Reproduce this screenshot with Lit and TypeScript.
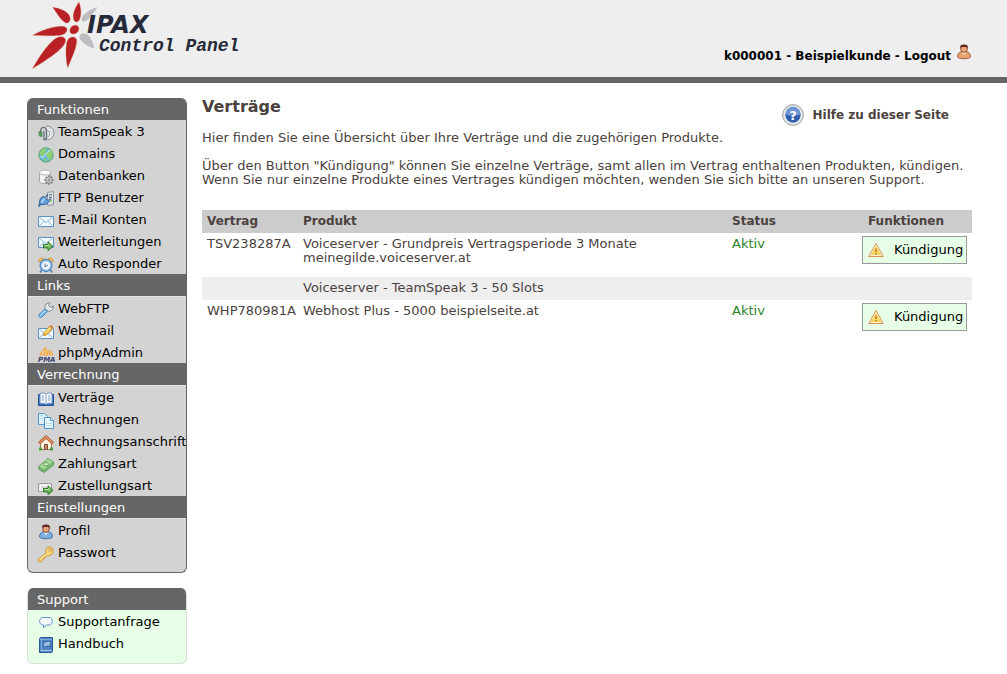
import { LitElement, css, html, svg, type SVGTemplateResult } from "lit";
import { customElement, property } from "lit/decorators.js";

const arrow = svg`<path d="M5.500 9.500h4.500V6.800l5 4.600-5 4.200v-2.700H5.500z" fill="#6fb85a" stroke="#32762a"/>
  <path d="M6.500 10.500h4.500V9" fill="none" stroke="#b4e29c"/>`;

const envelope = svg`<path d="M.5 2.500h15v10H.5z" fill="#f2f9ff" stroke="#5c93c4"/>
  <path d="M1.500 3.500l6.500 5 6.500-5M1.500 11.500L6 7.500m8.500 4L10 7.500" fill="none" stroke="#8db9dd"/>`;

const person = (shirt: string, edge: string) => svg`
  <path d="M1.500 13c0-3.500 2-5 4.500-5.500h4c2.500.5 4.500 2 4.500 5.500-1 2.300-12 2.300-13 0z" fill="${shirt}" stroke="${edge}"/>
  <path d="M5.500 8.500l2.500 2.500 2.500-2.500" fill="#fff" opacity=".7"/>
  <circle cx="8" cy="5" r="3.300" fill="#eaa577" stroke="#97502f"/>
  <path d="M4 5C3.500 1 6 .5 8 .5S12.500 1 12 5l-1-2H5z" fill="#5e2a22"/>`;

const icons: Record<string, SVGTemplateResult> = {
  teamspeak: svg`
    <path d="M8 1a7 7 0 0 1 2 14" fill="#d9dde0" stroke="#8e9499"/>
    <path d="M8 3.500a5 5 0 0 1 2 9.500M8 6a3 3 0 0 1 2 5" fill="none" stroke="#f5f7f8"/>
    <path d="M8 4.700a4 4 0 0 1 2 7.300" fill="none" stroke="#8e9499"/>
    <path d="M2.500 7C2.500 1 8.500 1 8.500 6v8.500H6V6" fill="none" stroke="#66707a" stroke-width="1.300"/>
    <path d="M1 6.500h3v5H2.500C1.500 11.500 1 10.500 1 9.500z" fill="#49a14d" stroke="#667a6b" stroke-width=".7"/>`,
  globe: svg`
    <circle cx="8" cy="8" r="7" fill="#68b4e2"/>
    <path d="M2 5c1-2 3-3.500 5-3.500L9 3 7 5l1 2-3 1-1 2-2-3zm7 1l3-3 2 2v5l-2 3-2-1-1-3-1-2zM5 11l3 1 1 2.500-3-1z" fill="#8cd270"/>
    <path d="M2.500 9.500c2 2 5-1 6-3s3-4 5-2" fill="none" stroke="#e3f5ec"/>
    <circle cx="8" cy="8" r="7.200" fill="none" stroke="#5cab60"/>`,
  database: svg`
    <path d="M1.500 3.500v9c0 2.700 11 2.700 11 0v-9z" fill="#f4f4f4" stroke="#a8a8a8"/>
    <ellipse cx="7" cy="3.500" rx="5.500" ry="2.500" fill="#fff" stroke="#b0b0b0"/>
    <path d="M11 6.300v9.400M6.300 11h9.400M7.700 7.700l6.600 6.600m0-6.600l-6.600 6.600" stroke="#72777b" stroke-width="1.600"/>
    <circle cx="11" cy="11" r="3.200" fill="#d4d7d9" stroke="#72777b" stroke-width=".8"/><circle cx="11" cy="11" r="1" fill="#fff" stroke="#666" stroke-width=".8"/>`,
  plug: svg`
    <path d="M9.500 1.500l6-1v13l-6 1z" fill="#dce4ea" stroke="#8f98a0"/>
    <path d="M11 4l3-.5m-3 3l3-.5" stroke="#59616a"/><circle cx="13" cy="10" r="1" fill="#63c64d"/>
    <path d="M.5 15.500l3-3.500" stroke="#476f9e" stroke-width="2"/>
    <path d="M1.500 13c-.5-4 1.500-7.500 4.500-7.500l5 5C10.500 13 6 14.500 1.500 13z" fill="#5f9cd8" stroke="#2f659f"/>
    <path d="M7.500 6l2.500-2.500m.5 6l2.500-2" stroke="#355b83" stroke-width="1.300"/><path d="M3.500 11.500l3-4" stroke="#bbddf5" stroke-width="1.500"/>`,
  mail: svg`<g transform="translate(0 1)">${envelope}</g>`,
  forward: svg`${envelope}${arrow}`,
  clock: svg`
    <path d="M1 5c-1-3 2-5 5-3zm14 0c1-3-2-5-5-3z" fill="#f6c66a" stroke="#d18a2a" stroke-width=".8"/>
    <path d="M3.500 13L2 15.500m10.500-2.500l1.500 2.500" stroke="#4c79aa" stroke-width="1.500"/>
    <circle cx="8" cy="8.500" r="6" fill="#8cbfec" stroke="#3b78b5"/>
    <circle cx="8" cy="8.500" r="4.200" fill="#f6fbff" stroke="#b9dbf4"/>
    <path d="M7 6.500v3.500L10 8" fill="none" stroke="#466f99"/>`,
  wrench: svg`
    <path d="M7 6.500C6 3 9 .5 12 1L10.500 3.500l2 2L15.300 4c.5 3-2 6-5.300 5z" fill="#e3e7ea" stroke="#81888f"/>
    <path d="M7 7l2.500 2.500-5.500 5.500c-2 1.500-4-.5-3-2.500z" fill="#7ab9e8" stroke="#4a8cc4"/><path d="M2.500 13L7.500 8.300" stroke="#c5e5fb"/>`,
  webmail: svg`
    <g transform="translate(0 2)">${envelope}</g>
    <path d="M5.500 11.500l.5-3 6-6.500c1.500-1 3.500.5 2.500 2.500l-6 6.500z" fill="#f9cd57" stroke="#c98b2e"/>
    <path d="M12 2l2.500 2.500" stroke="#d36e3f" stroke-width="1.500"/><path d="M7 8.500l5-5" stroke="#fff0a8"/>`,
  pma: svg`
    <path d="M1 9.500L5.500 2v7.500zM6.200 9.500V.5c3.300 2 4.300 5 4.300 9zM11.200 9.500l-.7-6c2.500 1 4.500 3.500 5 6z" fill="#f4a840"/>
    <path d="M3.500 9.500L5 5M8 9V4m5 5V7" stroke="#ffda9c"/>
    <text x="0" y="16" class="tiny">PMA</text>`,
  book: svg`
    <path d="M.5 3.500v11h15v-11z" fill="#3e70bc" stroke="#234e96"/>
    <path d="M2 2.500c3-1 5-.5 6 1 1-1.500 3-2 6-1v10c-3-.7-5-.2-6 1-1-1.200-3-1.700-6-1z" fill="#fff" stroke="#6b91c4"/>
    <path d="M8 3.500v9M3.500 5H6M3.500 7H6M3.500 9H6m4-4h2.500M10 7h2.500M10 9h2.500" stroke="#7d9cc5"/>`,
  papers: svg`
    <path d="M.5.500h6l3 3v8h-9z" fill="#dff0fb" stroke="#5899cd"/>
    <path d="M6.500 4.500h6l3 3v8h-9z" fill="#e8f6ff" stroke="#4b90c8"/>
    <path d="M12.500 4.500v3h3" fill="#fff" stroke="#4b90c8"/><path d="M2 2.500h3M2 5.500h3M8 10.500h6m-6 2h6" stroke="#b5dcf3"/>`,
  house: svg`
    <path d="M2.500 8L8 3l5.500 5v6.500h-11z" fill="#fff2dc" stroke="#97805e"/>
    <path d="M6.500 14.500V9.500h3v5z" fill="#c4895d" stroke="#80513a"/>
    <path d="M1 8.500L8 2l7 6.500" fill="none" stroke="#a4532e" stroke-width="3"/><path d="M1 8.500L8 2l7 6.500" fill="none" stroke="#e69966" stroke-width="1.400"/>
    <path d="M1 15.500v-3h3v3zm11 0v-3h3v3z" fill="#4da23e"/>`,
  money: svg`
    <path d="M.7 10L10 1.500 15.500 5v3L6 15.500.7 12z" fill="#79b871" stroke="#5a9f54"/>
    <path d="M.7 9.500L10 1.500 15.300 5 6 13z" fill="#a6d998" stroke="#6db262"/>
    <ellipse cx="8" cy="7.200" rx="2.300" ry="1.700" fill="#dff2d5" stroke="#5aa04f"/>`,
  delivery: svg`
    <path d="M.5 4.500h13v8H.5z" fill="#ececec" stroke="#9c9c9c"/><path d="M2.500 6.500h9v4h-9z" fill="#d7d7d7" stroke="#fff"/>
    ${arrow}`,
  profile: person("#7fb0e2", "#3e72ad"),
  user: person("#e3a26f", "#9e5f36"),
  key: svg`
    <path d="M8 7C6.500 3 9.500.5 12.500 1S16 6 14 8s-4 1.800-4.500 1.600L8 11H6.500v1.500H5V14l-1.500 1.500h-3v-2.500z" fill="#f8d56d" stroke="#cf9341"/>
    <circle cx="12" cy="4" r="1.300" fill="#fff" stroke="#cf9341"/><path d="M2 13.500L8.500 7.800" stroke="#fff3b5"/>`,
  bubble: svg`
    <path d="M5 2.500h6c4.500 0 4.500 7.500 0 7.500H8.500L5.500 13V10H5c-4.500 0-4.500-7.500 0-7.500z" fill="#f2f8ff" stroke="#6593ce"/>
    <path d="M4 5h8" stroke="#fff"/>`,
  manual: svg`
    <path d="M1.500 1.500l1-1h12v14l-1 1h-12z" fill="#4d86c5" stroke="#285b98"/>
    <path d="M3.500 1v13M2 2.500h12" stroke="#79a9d8"/><path d="M5.500 4.500h7v5h-7z" fill="#82afdb" stroke="#315f95" stroke-width=".8"/>
    <path d="M6 9l6-4" stroke="#bed9f0"/><path d="M2.500 13.500h11" stroke="#a9c9e8"/>`,
  warning: svg`
    <path d="M8 1.500L15.300 14.500H.7z" fill="#fff6d8" stroke="#d79552" stroke-linejoin="round"/>
    <path d="M8 4L13.300 13H2.700z" fill="#f7d35f"/><path d="M8 6.500v3.500m0 1v1.500" stroke="#c77a26" stroke-width="1.500"/>`,
  help: svg`
    <circle cx="8" cy="8" r="7.600" fill="#d9d9d9" stroke="#a9a9a9" stroke-width=".7"/>
    <circle cx="8" cy="8" r="6" fill="#315fae" stroke="#f8f8f8" stroke-width=".8"/>
    <path d="M2.500 7.500a5.500 5.500 0 0 1 11 0c-3 1.500-8 1.500-11 0z" fill="#6e96d5"/>
    <text x="8" y="11.500" class="mark">?</text>`,
};

@customElement("panel-icon")
export class PanelIcon extends LitElement {
  @property() name = "";

  static styles = css`
    :host { display: block; flex: none; width: 16px; height: 16px; }
    svg { display: block; width: 100%; height: 100%; overflow: visible; }
    .tiny { font: italic bold 7px "DejaVu Sans", sans-serif; fill: #3d4470; }
    .mark { font: bold 9px "DejaVu Sans", sans-serif; fill: #fff; text-anchor: middle; }
  `;

  render() {
    return html`<svg viewBox="0 0 16 16" fill="none" aria-hidden="true">${icons[this.name]}</svg>`;
  }
}

type Section = { title: string; items: [string, string][] };

const menu: Section[] = [
  { title: "Funktionen", items: [["teamspeak", "TeamSpeak 3"], ["globe", "Domains"], ["database", "Datenbanken"], ["plug", "FTP Benutzer"], ["mail", "E-Mail Konten"], ["forward", "Weiterleitungen"], ["clock", "Auto Responder"]] },
  { title: "Links", items: [["wrench", "WebFTP"], ["webmail", "Webmail"], ["pma", "phpMyAdmin"]] },
  { title: "Verrechnung", items: [["book", "Verträge"], ["papers", "Rechnungen"], ["house", "Rechnungsanschrift"], ["money", "Zahlungsart"], ["delivery", "Zustellungsart"]] },
  { title: "Einstellungen", items: [["profile", "Profil"], ["key", "Passwort"]] },
];

const support: Section[] = [
  { title: "Support", items: [["bubble", "Supportanfrage"], ["manual", "Handbuch"]] },
];

@customElement("side-menu")
export class SideMenu extends LitElement {
  @property({ attribute: false }) sections: Section[] = [];

  static styles = css`
    :host {
      display: block;
      overflow: hidden;
      box-sizing: border-box;
      padding-bottom: 9px;
      border: 1px solid #666;
      border-top: 0;
      border-radius: 6px;
      background: #d3d3d3;
    }
    :host([tone="support"]) { border-color: #d8dfd8; background: #e6ffe6; }
    h2 {
      margin: 0 -1px;
      padding: 2px 10px 0;
      background: #666;
      color: #fff;
      font-size: 13px;
      font-weight: 400;
      line-height: 20px;
    }
    ul { margin: 0; padding: 0; list-style: none; }
    section + section ul { border-top: 1px solid #e4e4e4; }
    a {
      display: flex;
      gap: 4px;
      height: 22px;
      padding-left: 10px;
      color: #000;
      line-height: 24px;
      text-decoration: none;
      white-space: nowrap;
    }
    panel-icon { margin-top: 5px; }
  `;

  render() {
    return this.sections.map(
      (s) => html`<section>
        <h2>${s.title}</h2>
        <ul>
          ${s.items.map(([icon, label]) => html`<li><a href="#"><panel-icon name=${icon}></panel-icon>${label}</a></li>`)}
        </ul>
      </section>`,
    );
  }
}

type Row = { id: string; product: string[]; status: string };

const rows: Row[] = [
  { id: "TSV238287A", product: ["Voiceserver - Grundpreis Vertragsperiode 3 Monate", "meinegilde.voiceserver.at"], status: "Aktiv" },
  { id: "", product: ["Voiceserver - TeamSpeak 3 - 50 Slots"], status: "" },
  { id: "WHP780981A", product: ["Webhost Plus - 5000 beispielseite.at"], status: "Aktiv" },
];

@customElement("app-root")
export class AppRoot extends LitElement {
  static styles = css`
    :host {
      display: block;
      background: #fff;
      color: #4b4240;
      font: 13px/14px Verdana, "DejaVu Sans", sans-serif;
    }
    a { color: inherit; text-decoration: none; }
    .top {
      display: flex;
      justify-content: space-between;
      align-items: flex-start;
      height: 77px;
      padding: 0 35px 0 30px;
      border-bottom: 6px solid #666;
      background: #eee;
    }
    .logo { display: block; width: 216px; height: 72px; }
    .petal { fill: #b92127; stroke: #cf8a55; stroke-width: 1px; }
    .pale { fill: #bdbcc1; }
    .brand { font: italic bold 24px "DejaVu Sans", sans-serif; fill: #262a38; }
    .sub { font: italic bold 18px "Liberation Mono", monospace; fill: #262a38; }
    .account { display: flex; gap: 5px; margin-top: 44px; color: #000; font-size: 12px; font-weight: 700; line-height: 24px; }
    .body { display: flex; align-items: flex-start; gap: 15px; padding: 15px 35px 10px 27px; }
    .side { display: flex; flex: none; flex-direction: column; gap: 15px; width: 160px; }
    main { flex: 1; min-width: 0; }
    .head { display: flex; justify-content: space-between; }
    h1 { margin: 0 0 15px; font-size: 16px; line-height: 18px; }
    p { margin: 0 0 14px; }
    .help { display: flex; align-items: center; gap: 9px; height: 24px; margin: 5px 23px 0 0; font-size: 12px; font-weight: 700; }
    .help panel-icon { width: 22px; height: 22px; }
    table { width: 100%; margin-top: 23px; border-collapse: collapse; table-layout: fixed; }
    .c-id { width: 96px; }
    .c-status { width: 130px; }
    .c-action { width: 115px; }
    th, td { padding: 4px 5px 5px; text-align: left; vertical-align: top; }
    th { background: #ccc; font-size: 12px; }
    th:last-child { padding-left: 11px; }
    td:last-child { padding: 3px 5px 0; }
    .first td { padding-bottom: 12px; }
    .sub-row td { background: #eee; }
    .status { color: #2b822b; }
    button {
      display: flex;
      align-items: center;
      gap: 10px;
      box-sizing: border-box;
      width: 100%;
      height: 28px;
      padding: 0 5px;
      border: 1px solid #999;
      background: #e6ffe6;
      color: #000;
      font: inherit;
    }
  `;

  render() {
    return html`
      <header class="top">
        <a href="#">
          <svg class="logo" viewBox="30 0 216 72" role="img" aria-label="IPAX Control Panel">
            <g transform="translate(20 0) scale(.3333)">
              <path class="petal" d="M98 22C120 24 144 36 149 48S148 70 138 69C125 64 112 42 98 22z" />
              <path class="petal" d="M177 6C184 24 185 47 178 60C172 70 161 66 160 54C158 40 166 22 177 6z" />
              <path class="petal" d="M38 106C66 88 112 76 129 79S143 94 134 101C120 110 74 107 38 106z" />
              <path class="petal" d="M38 206C58 168 92 119 116 111C132 108 141 117 135 129C126 150 80 180 38 206z" />
              <path class="petal" d="M143 203C136 172 136 134 143 120C151 107 169 108 170 121C171 140 156 174 143 203z" />
              <ellipse class="petal" cx="163" cy="89" rx="15" ry="12" transform="rotate(-40 163 89)" />
              <path class="pale" d="M232 21C220 40 204 64 192 65C183 65 184 54 190 46C200 34 216 27 232 21z" />
              <path class="pale" d="M224 146C204 139 183 127 179 113C177 101 190 96 201 103C214 112 219 130 224 146z" />
            </g>
            <text class="brand" x="87" y="33">IPAX</text>
            <text class="sub" x="99" y="51">Control Panel</text>
          </svg>
        </a>
        <div class="account">
          <span>k000001 - Beispielkunde - <a href="#">Logout</a></span>
          <panel-icon name="user"></panel-icon>
        </div>
      </header>
      <div class="body">
        <nav class="side">
          <side-menu .sections=${menu}></side-menu>
          <side-menu tone="support" .sections=${support}></side-menu>
        </nav>
        <main>
          <div class="head">
            <div>
              <h1>Verträge</h1>
              <p>Hier finden Sie eine Übersicht über Ihre Verträge und die zugehörigen Produkte.</p>
            </div>
            <a class="help" href="#"><panel-icon name="help"></panel-icon>Hilfe zu dieser Seite</a>
          </div>
          <p>
            Über den Button "Kündigung" können Sie einzelne Verträge, samt allen im Vertrag enthaltenen Produkten, kündigen.<br />
            Wenn Sie nur einzelne Produkte eines Vertrages kündigen möchten, wenden Sie sich bitte an unseren Support.
          </p>
          <table>
            <colgroup>
              <col class="c-id" /><col /><col class="c-status" /><col class="c-action" />
            </colgroup>
            <thead>
              <tr><th>Vertrag</th><th>Produkt</th><th>Status</th><th>Funktionen</th></tr>
            </thead>
            <tbody>
              ${rows.map(
                (r) => html`<tr class=${r.product.length > 1 ? "first" : r.id ? "" : "sub-row"}>
                  <td>${r.id}</td>
                  <td>${r.product.map((line, i) => html`${i ? html`<br />` : ""}${line}`)}</td>
                  <td class="status">${r.status}</td>
                  <td>${r.id ? html`<button type="button"><panel-icon name="warning"></panel-icon>Kündigung</button>` : ""}</td>
                </tr>`,
              )}
            </tbody>
          </table>
        </main>
      </div>
    `;
  }
}
